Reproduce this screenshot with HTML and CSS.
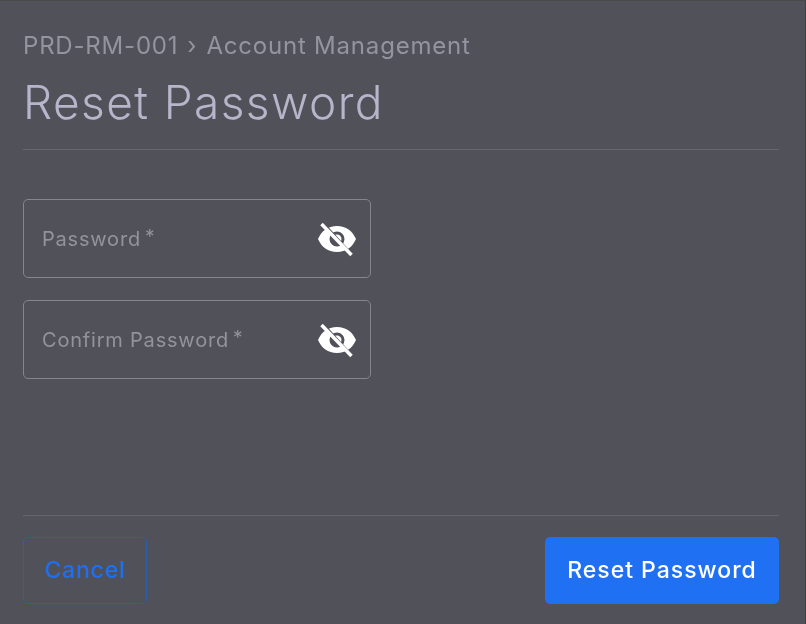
FILE: index.html
```html
<!DOCTYPE html>
<html lang="en">
<head>
<meta charset="utf-8">
<title>Reset Password</title>
<link rel="stylesheet" href="styles.css">
</head>
<body>
<main class="dialog">
  <header class="head">
    <nav class="crumbs"><span>PRD-RM-001</span><span class="sep">›</span><span>Account Management</span></nav>
    <h1 class="title">Reset Password</h1>
  </header>
  <form class="form">
    <div class="field">
      <span class="label">Password<span class="req">*</span></span>
      <svg class="eye" viewBox="0 0 40 36" width="40" height="36" aria-hidden="true">
        <path class="eye-fill" fill-rule="evenodd" d="M1 18C4.500 10 11 5 20 5s15.500 5 19 13c-3.500 8-10 13-19 13S4.500 26 1 18zM20 10.500a7.500 7.500 0 1 0 0 15 7.500 7.500 0 0 0 0-15z"/>
        <path class="eye-fill" d="M20 13.500a4.500 4.500 0 0 1 4.500 4.500c0 1.200-.4 2.200-1 3L16.800 14.800c.8-.8 2-1.300 3.200-1.300z"/>
        <path class="eye-gap" d="M6.500 3l27.500 30"/>
        <path class="eye-line" d="M4.500 3l30 31"/>
      </svg>
    </div>
    <div class="field">
      <span class="label">Confirm Password<span class="req">*</span></span>
      <svg class="eye" viewBox="0 0 40 36" width="40" height="36" aria-hidden="true">
        <path class="eye-fill" fill-rule="evenodd" d="M1 18C4.500 10 11 5 20 5s15.500 5 19 13c-3.500 8-10 13-19 13S4.500 26 1 18zM20 10.500a7.500 7.500 0 1 0 0 15 7.500 7.500 0 0 0 0-15z"/>
        <path class="eye-fill" d="M20 13.500a4.500 4.500 0 0 1 4.500 4.500c0 1.200-.4 2.200-1 3L16.800 14.800c.8-.8 2-1.300 3.200-1.300z"/>
        <path class="eye-gap" d="M6.500 3l27.500 30"/>
        <path class="eye-line" d="M4.500 3l30 31"/>
      </svg>
    </div>
  </form>
  <footer class="foot">
    <button class="btn btn-cancel" type="button">Cancel</button>
    <button class="btn btn-primary" type="button">Reset Password</button>
  </footer>
</main>
</body>
</html>
```
FILE: styles.css
```css
* { box-sizing: border-box; }
html, body { margin: 0; height: 100%; }
body { background: #515159; font-family: Inter, "Liberation Sans", sans-serif; overflow: hidden; }
.dialog { height: 624px; width: 806px; padding: 0 26px 20px 23px; display: flex; flex-direction: column; border-top: 1px solid #484a47; border-right: 1px solid #404141; will-change: transform; }
.head { height: 149px; padding-top: 30px; border-bottom: 1px solid #66666d; }
.crumbs { display: flex; gap: 9px; font-size: 24px; line-height: 30px; color: #94949f; font-weight: 400; letter-spacing: 0.8px; }
.title { margin: 12px 0 0; font-size: 46px; line-height: 58px; font-weight: 300; color: #b6b6cb; letter-spacing: 1.4px; }
.form { flex: 1; display: flex; flex-direction: column; gap: 22px; padding-top: 49px; }
.field { width: 348px; height: 79px; border: 1px solid #85858a; border-radius: 5px; padding: 0 13px 0 18px; display: flex; align-items: center; justify-content: space-between; }
.label { font-size: 20px; color: #93939c; letter-spacing: 0.8px; font-weight: 400; }
.req { margin-left: 4px; font-size: 19px; line-height: 0; vertical-align: 3px; }
.eye { display: block; }
.eye-fill { fill: #fff; }
.eye-gap { stroke: #515159; stroke-width: 3; fill: none; }
.eye-line { stroke: #fff; stroke-width: 3.5; fill: none; }
.foot { border-top: 1px solid #66666d; padding-top: 21px; display: flex; justify-content: space-between; }
.btn { height: 67px; border-radius: 5px; font-family: inherit; font-size: 23px; letter-spacing: 1px; font-weight: 500; padding: 0 0 2px; }
.btn-cancel { width: 124px; background: transparent; border: 1px solid #2a5fae; color: #1f70f0; letter-spacing: 0.8px; }
.btn-primary { width: 234px; background: #1f70f2; border: 0; color: #fff; }
```
